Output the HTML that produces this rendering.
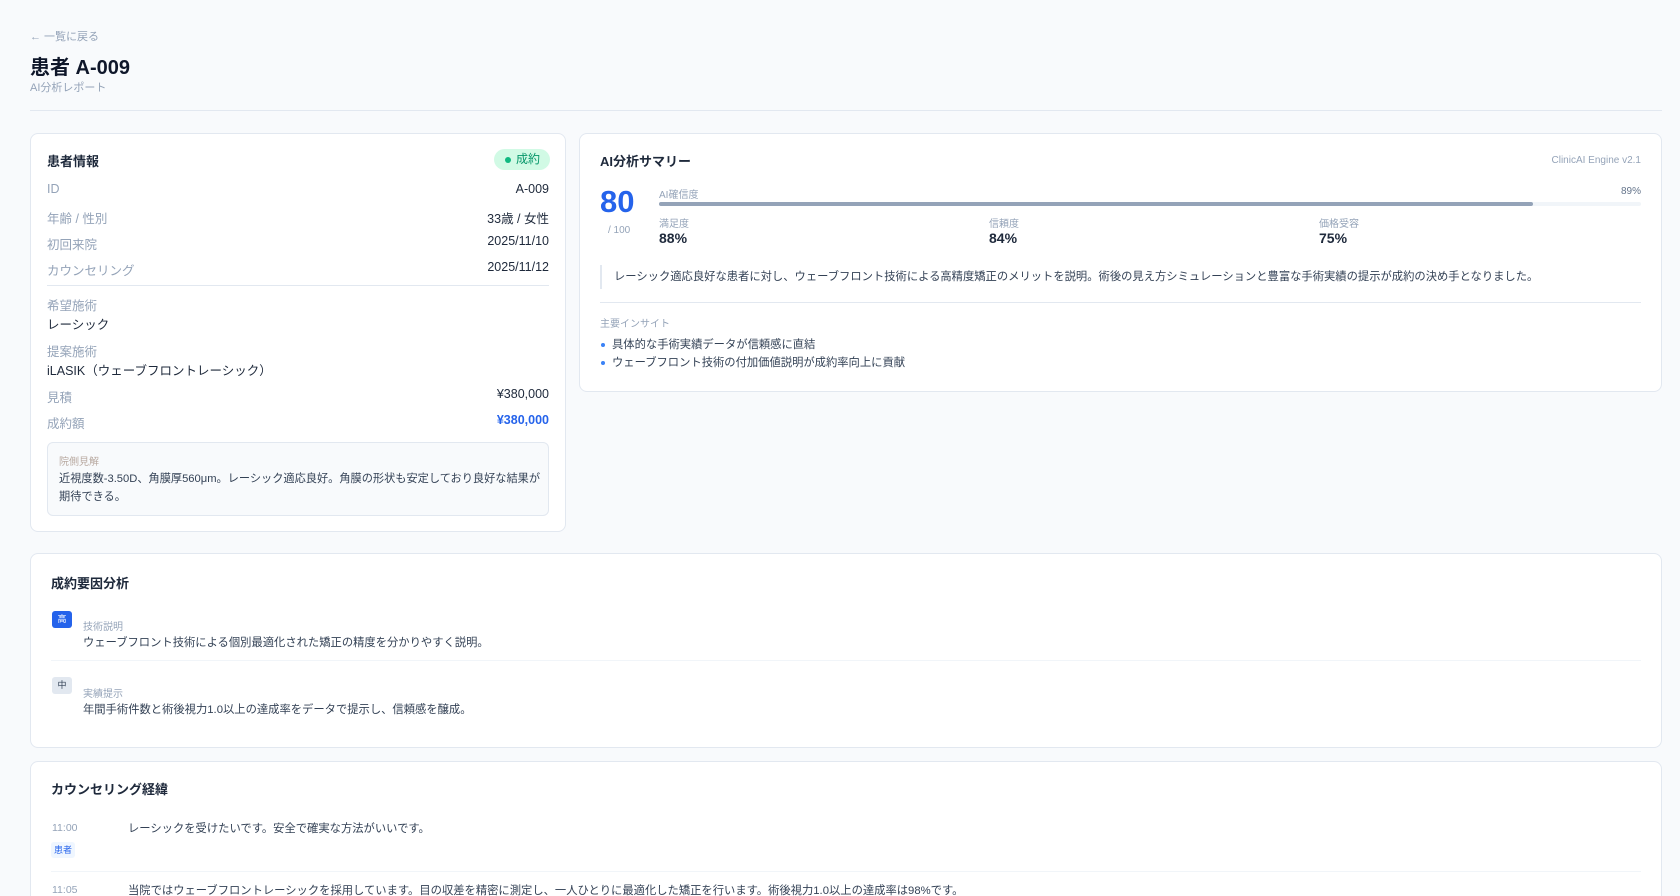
<!DOCTYPE html>
<html><head><meta charset="utf-8"><style>
*{box-sizing:border-box;margin:0;padding:0}
html,body{width:1680px;height:896px;overflow:hidden}
body{background:#f8fafc;font-family:"Liberation Sans","Noto Sans CJK JP",sans-serif;color:#1e293b;position:relative}
.a{position:absolute;white-space:nowrap}
.card{position:absolute;background:#fff;border:1px solid #e2e8f0;border-radius:8px}
.lbl{color:#94a3b8;font-size:12.5px}
.val{font-size:12.5px;color:#1e293b}
.r{right:16px;text-align:right}
.h{font-size:13px;font-weight:bold;color:#1e293b}
</style></head><body>
<div class="a" style="left:30px;top:28px;font-size:11px;color:#94a3b8">← 一覧に戻る</div>
<div class="a" style="left:30px;top:51px;font-size:20px;font-weight:bold;color:#0f172a">患者 A-009</div>
<div class="a" style="left:30px;top:79px;font-size:11px;color:#94a3b8">AI分析レポート</div>
<div class="a" style="left:30px;top:110px;width:1632px;height:1px;background:#e2e8f0"></div>

<div class="card" style="left:30px;top:133px;width:536px;height:399px">
 <div class="a h" style="left:16px;top:17px">患者情報</div>
 <div class="a" style="right:15px;top:15px;height:21px;width:56px;background:#d1fae5;border-radius:11px;color:#059669;font-size:12px;line-height:21px;padding-left:22px"><span style="position:absolute;left:11px;top:8px;width:6px;height:6px;border-radius:50%;background:#10b981"></span>成約</div>
 <div class="a lbl" style="left:16px;top:48px">ID</div><div class="a val r" style="top:48px">A-009</div>
 <div class="a lbl" style="left:16px;top:74px">年齢 / 性別</div><div class="a val r" style="top:74px">33歳 / 女性</div>
 <div class="a lbl" style="left:16px;top:100px">初回来院</div><div class="a val r" style="top:100px">2025/11/10</div>
 <div class="a lbl" style="left:16px;top:126px">カウンセリング</div><div class="a val r" style="top:126px">2025/11/12</div>
 <div class="a" style="left:16px;right:16px;top:151px;height:1px;background:#e2e8f0"></div>
 <div class="a lbl" style="left:16px;top:161px">希望施術</div>
 <div class="a val" style="left:16px;top:180px">レーシック</div>
 <div class="a lbl" style="left:16px;top:207px">提案施術</div>
 <div class="a val" style="left:16px;top:226px">iLASIK（ウェーブフロントレーシック）</div>
 <div class="a lbl" style="left:16px;top:253px">見積</div><div class="a val r" style="top:253px">¥380,000</div>
 <div class="a lbl" style="left:16px;top:279px">成約額</div><div class="a val r" style="top:279px;color:#2563eb;font-weight:bold">¥380,000</div>
 <div class="a" style="left:16px;right:16px;top:308px;height:74px;background:#f8fafc;border:1px solid #e2e8f0;border-radius:6px">
  <div class="a" style="left:11px;top:10px;font-size:10px;color:#b8a9a0">院側見解</div>
  <div class="a" style="left:11px;top:27px;font-size:11.2px;color:#334155;line-height:18px;white-space:normal;width:486px">近視度数-3.50D、角膜厚560μm。レーシック適応良好。角膜の形状も安定しており良好な結果が期待できる。</div>
 </div>
</div>

<div class="card" style="left:579px;top:133px;width:1083px;height:259px">
 <div class="a h" style="left:20px;top:17px">AI分析サマリー</div>
 <div class="a" style="right:20px;top:21px;font-size:10px;color:#94a3b8">ClinicAI Engine v2.1</div>
 <div class="a" style="left:20px;top:50px;font-size:31px;font-weight:bold;color:#2563eb">80</div>
 <div class="a" style="left:28px;top:91px;font-size:10px;color:#94a3b8">/ 100</div>
 <div class="a" style="left:79px;top:52px;font-size:10px;color:#94a3b8">AI確信度</div>
 <div class="a" style="right:20px;top:52px;font-size:10px;color:#64748b">89%</div>
 <div class="a" style="left:79px;right:20px;top:68px;height:4px;background:#f1f5f9;border-radius:2px"><div style="width:89%;height:4px;background:#94a3b8;border-radius:2px"></div></div>
 <div class="a" style="left:79px;top:81px;font-size:10px;color:#94a3b8">満足度</div>
 <div class="a" style="left:79px;top:96px;font-size:14px;font-weight:bold">88%</div>
 <div class="a" style="left:409px;top:81px;font-size:10px;color:#94a3b8">信頼度</div>
 <div class="a" style="left:409px;top:96px;font-size:14px;font-weight:bold">84%</div>
 <div class="a" style="left:739px;top:81px;font-size:10px;color:#94a3b8">価格受容</div>
 <div class="a" style="left:739px;top:96px;font-size:14px;font-weight:bold">75%</div>
 <div class="a" style="left:20px;top:131px;width:2px;height:24px;background:#e2e8f0"></div>
 <div class="a" style="left:34px;top:134px;font-size:11.3px;color:#334155">レーシック適応良好な患者に対し、ウェーブフロント技術による高精度矯正のメリットを説明。術後の見え方シミュレーションと豊富な手術実績の提示が成約の決め手となりました。</div>
 <div class="a" style="left:20px;right:20px;top:168px;height:1px;background:#e2e8f0"></div>
 <div class="a" style="left:20px;top:181px;font-size:10px;color:#94a3b8">主要インサイト</div>
 <div class="a" style="left:21px;top:209px;width:4px;height:4px;border-radius:50%;background:#3b82f6"></div>
 <div class="a" style="left:32px;top:202px;font-size:11.3px;color:#334155">具体的な手術実績データが信頼感に直結</div>
 <div class="a" style="left:21px;top:227px;width:4px;height:4px;border-radius:50%;background:#3b82f6"></div>
 <div class="a" style="left:32px;top:220px;font-size:11.3px;color:#334155">ウェーブフロント技術の付加価値説明が成約率向上に貢献</div>
</div>

<div class="card" style="left:30px;top:553px;width:1632px;height:195px">
 <div class="a h" style="left:20px;top:19px">成約要因分析</div>
 <div class="a" style="left:21px;top:57px;width:20px;height:17px;background:#2563eb;border-radius:3px;color:#fff;font-size:9px;text-align:center;line-height:17px">高</div>
 <div class="a" style="left:52px;top:64px;font-size:10px;color:#94a3b8">技術説明</div>
 <div class="a" style="left:52px;top:80px;font-size:11.3px;color:#334155">ウェーブフロント技術による個別最適化された矯正の精度を分かりやすく説明。</div>
 <div class="a" style="left:20px;right:20px;top:106px;height:1px;background:#f1f5f9"></div>
 <div class="a" style="left:21px;top:123px;width:20px;height:17px;background:#e2e8f0;border-radius:3px;color:#334155;font-size:9px;text-align:center;line-height:17px">中</div>
 <div class="a" style="left:52px;top:131px;font-size:10px;color:#94a3b8">実績提示</div>
 <div class="a" style="left:52px;top:147px;font-size:11.3px;color:#334155">年間手術件数と術後視力1.0以上の達成率をデータで提示し、信頼感を醸成。</div>
</div>

<div class="card" style="left:30px;top:761px;width:1632px;height:220px">
 <div class="a h" style="left:20px;top:17px">カウンセリング経緯</div>
 <div class="a" style="left:21px;top:60px;font-size:10.5px;color:#94a3b8">11:00</div>
 <div class="a" style="left:97px;top:58px;font-size:11.3px;color:#334155">レーシックを受けたいです。安全で確実な方法がいいです。</div>
 <div class="a" style="left:20px;top:80px;width:24px;height:16px;background:#eff6ff;border-radius:3px;color:#2563eb;font-size:9px;text-align:center;line-height:16px">患者</div>
 <div class="a" style="left:20px;right:20px;top:109px;height:1px;background:#f1f5f9"></div>
 <div class="a" style="left:21px;top:122px;font-size:10.5px;color:#94a3b8">11:05</div>
 <div class="a" style="left:97px;top:120px;font-size:11.3px;color:#334155">当院ではウェーブフロントレーシックを採用しています。目の収差を精密に測定し、一人ひとりに最適化した矯正を行います。術後視力1.0以上の達成率は98%です。</div>
</div>
</body></html>
